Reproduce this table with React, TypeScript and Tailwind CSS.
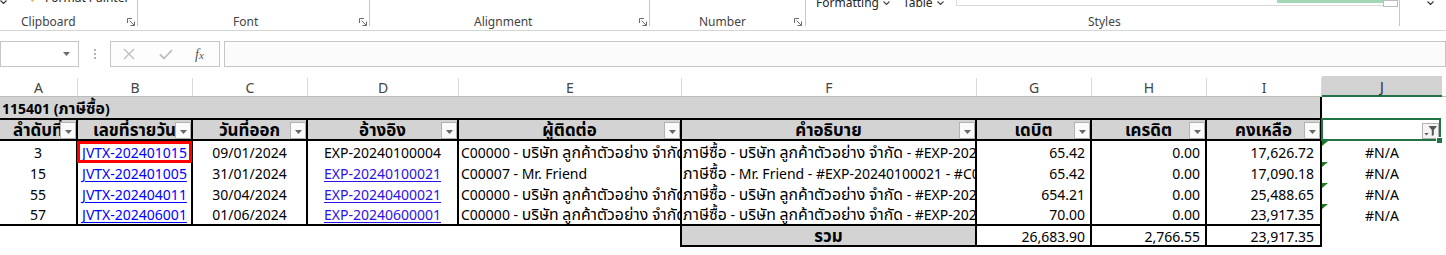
import React from "react";

const FONT = '"Noto Sans", "Noto Sans Thai", Tahoma, "DejaVu Sans", sans-serif';

const W = [
  "w-[78px]",
  "w-[115px]",
  "w-[115px]",
  "w-[151px]",
  "w-[223px]",
  "w-[295px]",
  "w-[115px]",
  "w-[115px]",
  "w-[115px]",
  "w-[120px]",
];

const LETTERS = ["A", "B", "C", "D", "E", "F", "G", "H", "I", "J"];
const HEADERS = ["ลำดับที่", "เลขที่รายวัน", "วันที่ออก", "อ้างอิง", "ผู้ติดต่อ", "คำอธิบาย", "เดบิต", "เครดิต", "คงเหลือ"];

type Row = {
  a: string;
  b: string;
  c: string;
  d: string;
  dLink: boolean;
  e: string;
  f: string;
  g: string;
  h: string;
  i: string;
};

const ROWS: Row[] = [
  {
    a: "3",
    b: "JVTX-202401015",
    c: "09/01/2024",
    d: "EXP-20240100004",
    dLink: false,
    e: "C00000 - บริษัท ลูกค้าตัวอย่าง จำกัด",
    f: "ภาษีซื้อ - บริษัท ลูกค้าตัวอย่าง จำกัด - #EXP-20240100004 - #C00000",
    g: "65.42",
    h: "0.00",
    i: "17,626.72",
  },
  {
    a: "15",
    b: "JVTX-202401005",
    c: "31/01/2024",
    d: "EXP-20240100021",
    dLink: true,
    e: "C00007 - Mr. Friend",
    f: "ภาษีซื้อ - Mr. Friend - #EXP-20240100021 - #C00007",
    g: "65.42",
    h: "0.00",
    i: "17,090.18",
  },
  {
    a: "55",
    b: "JVTX-202404011",
    c: "30/04/2024",
    d: "EXP-20240400021",
    dLink: true,
    e: "C00000 - บริษัท ลูกค้าตัวอย่าง จำกัด",
    f: "ภาษีซื้อ - บริษัท ลูกค้าตัวอย่าง จำกัด - #EXP-20240400021 - #C00000",
    g: "654.21",
    h: "0.00",
    i: "25,488.65",
  },
  {
    a: "57",
    b: "JVTX-202406001",
    c: "01/06/2024",
    d: "EXP-20240600001",
    dLink: true,
    e: "C00000 - บริษัท ลูกค้าตัวอย่าง จำกัด",
    f: "ภาษีซื้อ - บริษัท ลูกค้าตัวอย่าง จำกัด - #EXP-20240600001 - #C00000",
    g: "70.00",
    h: "0.00",
    i: "23,917.35",
  },
];

/* Thai runs are drawn a little larger, as Excel's Thai fallback font is wider */
function TH({ text }: { text: string }) {
  const parts = text.split(/([\u0E00-\u0E7F]+)/);
  return (
    <span className="whitespace-pre">
      {parts.map((p, i) =>
        /[\u0E00-\u0E7F]/.test(p) ? (
          <span key={i} className="text-[1.13em] leading-none">
            {p}
          </span>
        ) : (
          <React.Fragment key={i}>{p}</React.Fragment>
        )
      )}
    </span>
  );
}

function Launcher() {
  return (
    <svg width="8" height="8" viewBox="0 0 8 8" className="mb-[4px] shrink-0">
      <path d="M0.5 5 V0.5 H5" fill="none" stroke="#6a6a6a" strokeWidth="1" />
      <path d="M2.5 2.5 L7 7" stroke="#6a6a6a" strokeWidth="1" />
      <path d="M3.5 7.5 H7.5 V3.5" fill="none" stroke="#6a6a6a" strokeWidth="1" />
    </svg>
  );
}

function Sep() {
  return <div className="h-[26px] w-px shrink-0 bg-[#c6c6c6]" />;
}

function Chevron({ color = "#444" }: { color?: string }) {
  return (
    <svg width="7" height="4" viewBox="0 0 7 4" className="shrink-0">
      <path d="M0.5 0.5 L3.5 3.5 L6.5 0.5" fill="none" stroke={color} strokeWidth="1.1" />
    </svg>
  );
}

function Ribbon() {
  return (
    <div className="flex h-[31px] items-start overflow-hidden border-b border-[#d5d5d5] bg-white text-[12px] text-[#444]">
      {/* Clipboard */}
      <div className="flex h-[30px] w-[137px] shrink-0 flex-col justify-between">
        <div className="-mt-[10px] flex h-[16px] items-center text-[#262626]">
          <div className="mt-[8px]">
            <Chevron color="#333" />
          </div>
          <svg width="9" height="12" viewBox="0 0 9 12" className="ml-[21px]">
            <path d="M1 0 H8 V6 L4.5 10 L1 6 Z" fill="#f0b158" />
          </svg>
          <span className="ml-[8px] leading-[16px]">Format Painter</span>
        </div>
        <div className="flex h-[16px] items-end justify-between pr-[2px]">
          <span className="ml-[21px] leading-[16px]">Clipboard</span>
          <Launcher />
        </div>
      </div>
      <Sep />
      {/* Font */}
      <div className="flex h-[30px] w-[231px] shrink-0 flex-col justify-end">
        <div className="flex h-[16px] items-end justify-between pr-[2px]">
          <span className="ml-[95px] leading-[16px]">Font</span>
          <Launcher />
        </div>
      </div>
      <Sep />
      {/* Alignment */}
      <div className="flex h-[30px] w-[279px] shrink-0 flex-col justify-end">
        <div className="flex h-[16px] items-end justify-between pr-[2px]">
          <span className="ml-[104px] leading-[16px]">Alignment</span>
          <Launcher />
        </div>
      </div>
      <Sep />
      {/* Number */}
      <div className="flex h-[30px] w-[155px] shrink-0 flex-col justify-end">
        <div className="flex h-[16px] items-end justify-between pr-[3px]">
          <span className="ml-[49px] leading-[16px]">Number</span>
          <Launcher />
        </div>
      </div>
      <Sep />
      {/* Styles */}
      <div className="flex h-[30px] w-[593px] shrink-0 flex-col justify-between">
        <div className="flex h-[8px] items-start">
          <div className="-mt-[5px] ml-[10px] flex items-center gap-[4px] text-[#262626]">
            <span className="leading-[16px]">Formatting</span>
            <Chevron />
          </div>
          <div className="-mt-[5px] ml-[13px] flex items-center gap-[4px] text-[#262626]">
            <span className="leading-[16px]">Table</span>
            <Chevron />
          </div>
          <div className="ml-[12px] flex h-[6px] w-[427px] items-start justify-end border-b border-l border-[#d8d8d8]">
            <div className="h-[3px] w-[106px] bg-[#a3d7b8]" />
          </div>
          <div className="h-[7px] w-[15px] border border-[#bdbdbd] bg-white" />
        </div>
        <div className="flex h-[16px] items-end">
          <span className="ml-[282px] leading-[16px]">Styles</span>
        </div>
      </div>
      <Sep />
      <div className="flex h-[6px] flex-1 items-center pl-[27px]">
        <Chevron color="#333" />
      </div>
    </div>
  );
}

function FormulaBar() {
  return (
    <div className="flex h-[45px] items-start bg-white pt-[10px]">
      <div className="flex h-[26px] w-[79px] shrink-0 items-center justify-end border border-[#c6c6c6] bg-white pr-[8px]">
        <svg width="7" height="4" viewBox="0 0 7 4">
          <path d="M0 0 H7 L3.5 4 Z" fill="#6b6b6b" />
        </svg>
      </div>
      <div className="flex h-[26px] w-[31px] shrink-0 flex-col items-center justify-center gap-[2px]">
        <div className="h-[2px] w-[2px] bg-[#b4b4b4]" />
        <div className="h-[2px] w-[2px] bg-[#b4b4b4]" />
        <div className="h-[2px] w-[2px] bg-[#b4b4b4]" />
      </div>
      <div className="flex h-[26px] w-[110px] shrink-0 items-center border border-[#c6c6c6] bg-[#fdfdfd]">
        <svg width="12" height="12" viewBox="0 0 12 12" className="ml-[12px]">
          <path d="M1 1 L11 11 M11 1 L1 11" stroke="#bcbcbc" strokeWidth="1.3" />
        </svg>
        <svg width="14" height="11" viewBox="0 0 14 11" className="ml-[24px]">
          <path d="M1 5.5 L5 9.5 L13 1" fill="none" stroke="#bcbcbc" strokeWidth="1.8" />
        </svg>
        <span
          className="ml-[22px] text-[14px] italic text-[#555]"
          style={{ fontFamily: '"Liberation Serif", "DejaVu Serif", serif' }}
        >
          f<span className="text-[11px]">x</span>
        </span>
      </div>
      <div className="ml-[4px] h-[26px] flex-1 border border-[#c6c6c6] bg-[#fbfbfb]" />
    </div>
  );
}

function ColumnHeaders() {
  return (
    <div className="flex h-[21px] bg-white text-[14px] text-[#444]">
      {LETTERS.map((l, i) =>
        l === "J" ? (
          <div
            key={l}
            className={`${W[i]} flex shrink-0 items-center justify-center border-b-2 border-[#217346] bg-[#d2d2d2] pt-[2px] text-[#2b2b2b]`}
          >
            {l}
          </div>
        ) : (
          <div key={l} className={`${W[i]} flex shrink-0 items-stretch border-b border-[#bdbdbd]`}>
            <div className="flex flex-1 items-center justify-center pt-[3px]">{l}</div>
            <div className="mt-[2px] w-px bg-[#d9d9d9]" />
          </div>
        )
      )}
      <div className="flex-1 border-b border-[#bdbdbd]" />
    </div>
  );
}

function FilterButton() {
  return (
    <div className="absolute right-0 top-[2px] flex h-[17px] w-[16px] items-center justify-center border border-[#b3b3b3] bg-[#fafafa] pt-[2px]">
      <svg width="7" height="4" viewBox="0 0 7 4">
        <path d="M0 0 H7 L3.5 4 Z" fill="#666" />
      </svg>
    </div>
  );
}

function ErrTri() {
  return (
    <svg width="6" height="5" viewBox="0 0 6 5" className="absolute left-0 top-0">
      <path d="M0 0 H6 L0 5 Z" fill="#1f7a1f" />
    </svg>
  );
}

function Sheet() {
  return (
    <div className="text-[14px] text-black">
      <ColumnHeaders />
      {/* Row 1: title */}
      <div className="flex h-[21px]">
        <div className="flex w-[1322px] shrink-0 items-center border-r-2 border-black bg-[#d3d3d3] pl-[2px] pt-[1px] text-[14px] font-bold">
          <TH text="115401 (ภาษีซื้อ)" />
        </div>
        <div className="w-[120px] shrink-0 bg-white" />
      </div>
      {/* Row 2: headers */}
      <div className="flex h-[23px]">
        {HEADERS.map((h, i) => (
          <div
            key={h}
            className={`${W[i]} relative flex shrink-0 items-center justify-center overflow-hidden whitespace-nowrap border-y-2 border-r-2 border-black bg-[#d3d3d3] pt-[1px] text-[15px] font-bold`}
          >
            <TH text={h} />
            <FilterButton />
          </div>
        ))}
        <div className="relative h-[23px] w-[120px] shrink-0 bg-white">
          <div className="absolute -left-[1px] top-0 h-[23px] w-[120px] border-2 border-[#217346]" />
          <div className="absolute left-[100px] top-[5px] flex h-[16px] w-[17px] items-center justify-center border border-[#b3b3b3] bg-[#f4f4f4]">
            <svg width="14" height="12" viewBox="0 0 14 12">
              <path d="M4.5 1 H13 L9.8 5 V10 L7.8 11 V5 Z" fill="#555" />
              <path d="M0.5 8 H4.5 L2.5 10.5 Z" fill="#555" />
            </svg>
          </div>
          <div className="absolute left-[114px] top-[19px] h-[7px] w-[7px] border border-white bg-[#217346]" />
        </div>
      </div>
      {/* Data rows */}
      {ROWS.map((r, idx) => {
        const last = idx === ROWS.length - 1;
        const rowH = last ? "h-[22px] border-b-2" : "h-[21px]";
        const cell = `${rowH} flex shrink-0 items-center overflow-hidden whitespace-pre border-r-2 border-black pt-[1px]`;
        return (
          <div key={r.b} className="flex">
            <div className={`${W[0]} ${cell} justify-center`}>{r.a}</div>
            <div className={`${W[1]} ${cell} relative justify-center overflow-visible`}>
              <span className="text-[#0000ff] underline decoration-1 underline-offset-2">{r.b}</span>
              {idx === 0 && (
                <div className="absolute -left-[1px] top-0 h-[22px] w-[115px] border-[3px] border-[#ff0000]" />
              )}
            </div>
            <div className={`${W[2]} ${cell} justify-center`}>{r.c}</div>
            <div className={`${W[3]} ${cell} justify-center`}>
              {r.dLink ? (
                <span className="text-[#2b13e6] underline decoration-1 underline-offset-2">{r.d}</span>
              ) : (
                r.d
              )}
            </div>
            <div className={`${W[4]} ${cell} pl-[2px]`}>
              <TH text={r.e} />
            </div>
            <div className={`${W[5]} ${cell} pl-[1px]`}>
              <TH text={r.f} />
            </div>
            <div className={`${W[6]} ${cell} justify-end pr-[5px]`}>{r.g}</div>
            <div className={`${W[7]} ${cell} justify-end pr-[5px]`}>{r.h}</div>
            <div className={`${W[8]} ${cell} justify-end pr-[6px]`}>{r.i}</div>
            <div className={`${W[9]} relative flex h-[21px] shrink-0 items-center justify-center pt-[1px]`}>
              <ErrTri />
              #N/A
            </div>
          </div>
        );
      })}
      {/* Total row */}
      <div className="flex h-[21px]">
        <div className="w-[680px] shrink-0" />
        <div className="flex w-[297px] shrink-0 items-center justify-center border-x-2 border-b-2 border-black bg-[#d3d3d3] pt-[1px] text-[15px] font-bold">
          <TH text="รวม" />
        </div>
        <div className={`${W[6]} flex shrink-0 items-center justify-end border-b-2 border-r-2 border-black pr-[5px] pt-[1px]`}>
          26,683.90
        </div>
        <div className={`${W[7]} flex shrink-0 items-center justify-end border-b-2 border-r-2 border-black pr-[5px] pt-[1px]`}>
          2,766.55
        </div>
        <div className={`${W[8]} flex shrink-0 items-center justify-end border-b-2 border-r-2 border-black pr-[6px] pt-[1px]`}>
          23,917.35
        </div>
      </div>
    </div>
  );
}

export default function App() {
  return (
    <div className="h-[255px] w-[1446px] overflow-hidden bg-white" style={{ fontFamily: FONT }}>
      <Ribbon />
      <FormulaBar />
      <Sheet />
    </div>
  );
}
